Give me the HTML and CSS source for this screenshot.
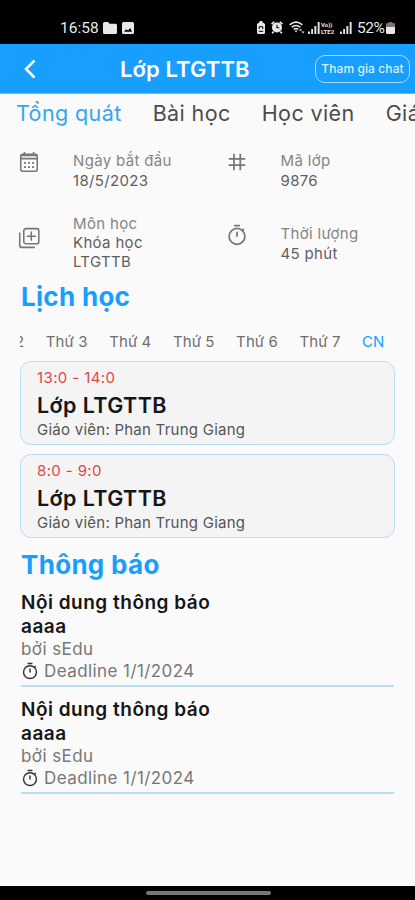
FILE: index.html
```html
<!DOCTYPE html>
<html lang="vi">
<head>
<meta charset="utf-8">
<title>Lớp LTGTTB</title>
<link rel="stylesheet" href="styles.css">
</head>
<body>
<svg width="0" height="0" class="defs">
  <symbol id="timer" viewBox="0 0 24 24"><g fill="none" stroke="currentColor" stroke-width="1.9"><circle cx="12" cy="13.5" r="8.6"/><path d="M8.8 1.9h6.4M12 8.5v5.5M18 7l1.6-1.6"/></g></symbol>
  <symbol id="signal" viewBox="0 0 12 12"><path fill="currentColor" d="M0 9.5h1.8V12H0zM3.2 7H5v5H3.2zM6.4 4h1.9v8H6.4zM9.7 0h1.9v12H9.7z"/></symbol>
</svg>
<div class="status">
  <span class="clock">16:58</span>
  <svg class="folder" viewBox="0 0 14 12"><path fill="currentColor" d="M0 1.5Q0 0 1.5 0H5l1.6 1.8h5.9Q14 1.8 14 3.3v7.2Q14 12 12.500 12h-11Q0 12 0 10.500z"/></svg>
  <svg class="photo" viewBox="0 0 12 12"><rect width="12" height="12" rx="1.500" fill="currentColor"/><path d="M2 9.800l2.200-2.600 1.800 1.300 2.200-2.400L10 9.800z" fill="#000"/></svg>
  <span class="spacer"></span>
  <svg class="saver" viewBox="0 0 10 13"><path fill="currentColor" d="M3.500 0h3v1.300L9 3v8.500Q9 13 7.500 13h-5Q1 13 1 11.500V3l2.500-1.700z"/><path d="M3.200 8V5.700h3.600V8M2.800 10.300h4.400" fill="none" stroke="#000"/></svg>
  <svg class="alarm" viewBox="0 0 12 13"><circle cx="6" cy="6.500" r="5" fill="currentColor"/><path d="M.6 3.200L3.200.8M11.400 3.200L8.800.8M2.600 10.600L1.200 12.300M9.400 10.600l1.400 1.700" stroke="currentColor" stroke-width="1.800"/><path d="M6 3.800v3h2.300" fill="none" stroke="#000" stroke-width="1.100"/></svg>
  <svg class="wifi" viewBox="0 0 16 13"><g fill="none" stroke="currentColor" stroke-width="1.500"><path d="M.6 3.800Q7 -1.500 13.400 3.800M2.700 6.200Q7 2.700 11.300 6.200M4.700 8.400Q7 6.600 9.300 8.400"/></g><path fill="currentColor" d="M5.500 9.600h3L7 11.600zM10 9.500l1.500-2 1.500 2zM12.500 10.500h3L14 12.600z"/></svg>
  <svg class="signal" viewBox="0 0 12 12"><use href="#signal"/></svg>
  <span class="lte"><b>Vo))</b><b>LTE2</b></span>
  <svg class="signal signal-b" viewBox="0 0 12 12"><use href="#signal"/></svg>
  <span class="percent">52%</span>
  <svg class="battery" viewBox="0 0 9 12"><path fill="#777" d="M2.500 0h4v1.200H9V6H0V1.200h2.500z"/><path fill="currentColor" d="M0 5h9v5.500Q9 12 7.500 12h-6Q0 12 0 10.500z"/></svg>
</div>
<header class="appbar">
  <svg class="back" viewBox="0 0 12 20"><path d="M10.500 1.500L2 10l8.500 8.500" fill="none" stroke="currentColor" stroke-width="2.600"/></svg>
  <h1>Lớp LTGTTB</h1>
  <button class="chat">Tham gia chat</button>
</header>
<nav class="tabs"><a class="active">Tổng quát</a><a>Bài học</a><a>Học viên</a><a>Giáo viên</a></nav>
<main>
  <section class="info">
    <div class="item">
      <svg class="ico" viewBox="0 0 24 24"><g fill="none" stroke="currentColor" stroke-width="1.700"><rect x="3" y="3.500" width="18" height="18.500" rx="2"/><path d="M3 8.300h18M3 5h18" /><path d="M7 1v3M17 1v3"/><path d="M6.500 13h11M6.500 17.500h11" stroke-dasharray="2.200 2.200" stroke-width="2"/></g></svg>
      <p>Ngày bắt đầu<span>18/5/2023</span></p>
    </div>
    <div class="item">
      <svg class="ico" viewBox="0 0 24 24"><path d="M8.700 3v18M15.600 3v18M3 8.700h18M3 15.500h18" fill="none" stroke="currentColor" stroke-width="1.900"/></svg>
      <p>Mã lớp<span>9876</span></p>
    </div>
    <div class="item subject">
      <svg class="ico wide" viewBox="0 0 24 24"><g fill="none" stroke="currentColor" stroke-width="1.700"><rect x="6.300" y="1.800" width="16.400" height="16.400" rx="2.500"/><path d="M14.500 5v10M9.500 10h10M1.900 6v14.200q0 2 2 2H18.500"/></g></svg>
      <p>Môn học<span>Khóa học LTGTTB</span></p>
    </div>
    <div class="item length">
      <svg class="ico timer"><use href="#timer"/></svg>
      <p>Thời lượng<span>45 phút</span></p>
    </div>
  </section>
  <h2 class="schedule">Lịch học</h2>
  <div class="days"><span>Thứ 2</span><span>Thứ 3</span><span>Thứ 4</span><span>Thứ 5</span><span>Thứ 6</span><span>Thứ 7</span><span class="active">CN</span></div>
  <article class="card"><time>13:0 - 14:0</time><h3>Lớp LTGTTB</h3><p>Giáo viên: Phan Trung Giang</p></article>
  <article class="card"><time>8:0 - 9:0</time><h3>Lớp LTGTTB</h3><p>Giáo viên: Phan Trung Giang</p></article>
  <h2 class="news">Thông báo</h2>
  <article class="notice"><h4>Nội dung thông báo</h4><h4>aaaa</h4><p>bởi sEdu</p><p class="deadline"><svg><use href="#timer"/></svg>Deadline 1/1/2024</p></article>
  <article class="notice"><h4>Nội dung thông báo</h4><h4>aaaa</h4><p>bởi sEdu</p><p class="deadline"><svg><use href="#timer"/></svg>Deadline 1/1/2024</p></article>
</main>
<footer class="navbar"><i></i></footer>
</body>
</html>
```
FILE: styles.css
```css
* { box-sizing: border-box; margin: 0; padding: 0; }
body {
  width: 415px; height: 900px; overflow: hidden;
  display: flex; flex-direction: column;
  background: #fafafa; color: #626262;
  font-family: Inter, "Liberation Sans", sans-serif;
}
svg { display: block; flex: none; }
.defs { position: absolute; }

.status {
  height: 44px; flex: none; display: flex; align-items: center;
  padding: 11px 20px 0 60px; background: #000; color: #e8e8e8;
}
.clock, .percent { font: 400 15.5px/18px Roboto, sans-serif; }
.clock { width: 43px; }
.folder { width: 14px; height: 12px; }
.photo { width: 12px; height: 12px; margin-left: 5px; }
.spacer { flex: 1; }
.saver { width: 10px; height: 13px; margin-right: 5px; }
.alarm { width: 12px; height: 13px; margin-right: 6px; }
.wifi { width: 16px; height: 13px; margin-right: 3px; }
.signal { width: 12px; height: 12px; }
.lte { width: 15px; margin: 0 4px 0 1px; display: flex; flex-direction: column; }
.lte b { font: 700 6px/7px Roboto, sans-serif; white-space: nowrap; }
.signal-b { margin-right: 5px; }
.percent { width: 29px; letter-spacing: -0.500px; }
.battery { width: 9px; height: 12px; }

.appbar {
  height: 50px; flex: none; display: flex; align-items: center;
  padding: 0 5px 0 24px; background: #189eff; color: #fff;
  border-bottom: 1px solid #5fbbfa;
}
.back { width: 12px; height: 20px; }
.appbar h1 { margin-left: 84px; font-size: 22px; font-weight: 600; line-height: 28px; letter-spacing: 0.100px; white-space: nowrap; }
.chat {
  width: 95px; height: 28px; margin-left: auto;
  border: 1px solid #a5dbff; border-radius: 10px;
  background: none; color: #d9f0ff;
  font: 500 12px/26px Inter, sans-serif; letter-spacing: 0.100px; white-space: nowrap;
}

.tabs {
  height: 40px; flex: none; display: flex; gap: 31px; overflow: hidden;
  padding-left: 16px; color: #4c4c4c; font-size: 21.500px; line-height: 39px; letter-spacing: 0.400px; white-space: nowrap;
}
.tabs .active { color: #35a6ee; }

main { flex: 1; padding: 0 20px 0 20px; }
.info { height: 145px; display: grid; grid-template-columns: 207.500px 1fr; grid-template-rows: 63px 81px; padding-top: 17px; }
.item { display: flex; align-items: flex-start; color: #858585; }
.item p { width: 108px; font-size: 15px; line-height: 20px; letter-spacing: 0.330px; white-space: nowrap; }
.item span { display: block; color: #5f5f5f; white-space: normal; }
.ico { width: 22px; height: 22px; margin: 0 33px 0 -2px; color: #777; }
.subject p { line-height: 19px; width: 90px; }
.subject .wide { margin-top: 13px; }
.length p { padding-top: 10px; }
.timer { margin-top: 10px; }

h2 { color: #189eff; font-size: 26px; font-weight: 700; line-height: 32px; letter-spacing: 0.300px; padding-left: 1px; }
.schedule { height: 50px; padding-top: 1.500px; }
.days {
  height: 32px; display: flex; justify-content: flex-end; gap: 21.500px; overflow: hidden;
  margin-right: 10.500px; color: #6f6f6f; font-size: 15px; line-height: 26px; letter-spacing: 0.100px; white-space: nowrap;
}
.days .active { color: #189eff; }

.card {
  height: 84px; margin-bottom: 9px; padding: 6px 16px;
  border: 1.500px solid #b8dff3; border-radius: 11px; background: #f4f4f4;
}
.card time { display: block; color: #e14747; font-size: 15px; line-height: 20px; letter-spacing: 0.380px; }
.card h3 { color: #161616; font-size: 21.500px; font-weight: 600; line-height: 34px; letter-spacing: 0.420px; }
.card p { color: #555; font-size: 15px; line-height: 16px; letter-spacing: 0.250px; }

.news { line-height: 36px; height: 43.500px; }
.notice { height: 107px; margin: 0 1px; }
.notice::after { content: ""; display: block; height: 1.500px; margin-top: 3px; background: #b8dff3; }
.notice h4 { color: #161616; font-size: 19px; font-weight: 600; line-height: 24.300px; letter-spacing: 0.500px; }
.notice p { color: #777; font-size: 17px; line-height: 21.500px; letter-spacing: 0.420px; }
.deadline { display: flex; align-items: center; }
.deadline svg { width: 18px; height: 18px; margin-right: 5px; color: #333; }

.navbar { height: 14px; flex: none; background: #000; padding-top: 5px; }
.navbar i { display: block; width: 125px; height: 4px; margin-left: 146px; border-radius: 2px; background: #777; }
```
